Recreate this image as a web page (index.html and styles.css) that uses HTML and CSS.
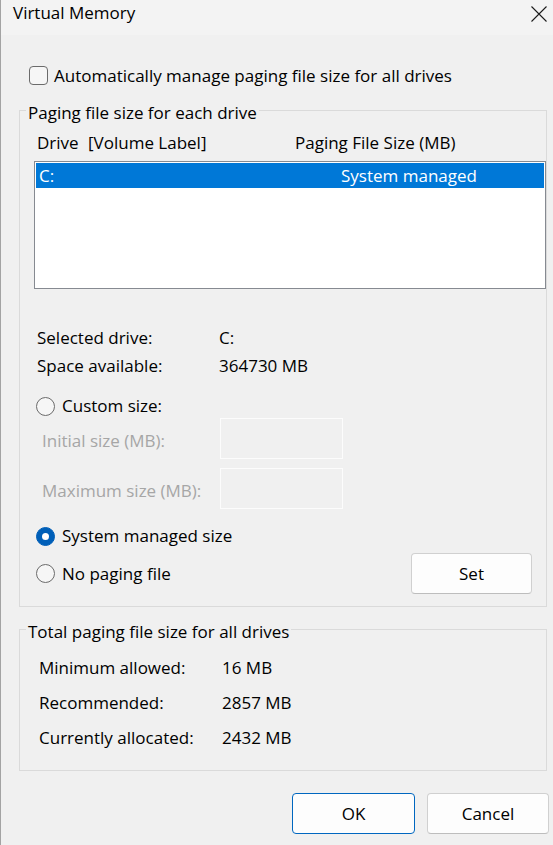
FILE: index.html
```html
<!DOCTYPE html>
<html lang="en">
<head>
    <meta charset="UTF-8">
    <meta name="viewport" content="width=device-width, initial-scale=1.0">
    <title>Virtual Memory</title>
    <link rel="stylesheet" href="styles.css">
</head>
<body>
    <div class="window">
        <div class="titlebar">
            <span class="title">Virtual Memory</span>
            <svg class="close" width="16" height="16" viewBox="0 0 16 16">
                <path d="M0.5 0.5L15.5 15.5M15.5 0.5L0.5 15.5" stroke="#1b1b1b" stroke-width="1.1" fill="none"/>
            </svg>
        </div>

        <div class="content">
            <label class="check-row"><span class="checkbox"></span>Automatically manage paging file size for all drives</label>

            <fieldset class="group group-drive">
                <legend>Paging file size for each drive</legend>
                <div class="list-header">
                    <span>Drive</span>
                    <span>[Volume Label]</span>
                    <span>Paging File Size (MB)</span>
                </div>
                <div class="listview">
                    <div class="list-row selected">
                        <span>C:</span>
                        <span>System managed</span>
                    </div>
                </div>

                <div class="info-row info-first">
                    <span class="info-label">Selected drive:</span>
                    <span>C:</span>
                </div>
                <div class="info-row">
                    <span class="info-label">Space available:</span>
                    <span>364730 MB</span>
                </div>

                <div class="radio-row radio-custom"><span class="radio"></span>Custom size:</div>
                <div class="size-row">
                    <span class="size-label">Initial size (MB):</span>
                    <span class="textbox"></span>
                </div>
                <div class="size-row size-max">
                    <span class="size-label">Maximum size (MB):</span>
                    <span class="textbox"></span>
                </div>
                <div class="radio-row radio-system"><span class="radio checked"></span>System managed size</div>
                <div class="last-row">
                    <div class="radio-row"><span class="radio"></span>No paging file</div>
                    <button class="btn btn-set">Set</button>
                </div>
            </fieldset>

            <fieldset class="group group-total">
                <legend>Total paging file size for all drives</legend>
                <div class="total-row total-first">
                    <span class="total-label">Minimum allowed:</span>
                    <span>16 MB</span>
                </div>
                <div class="total-row">
                    <span class="total-label">Recommended:</span>
                    <span>2857 MB</span>
                </div>
                <div class="total-row">
                    <span class="total-label">Currently allocated:</span>
                    <span>2432 MB</span>
                </div>
            </fieldset>
        </div>

        <div class="footer">
            <button class="btn btn-ok">OK</button>
            <button class="btn">Cancel</button>
        </div>
    </div>
</body>
</html>
```

FILE: styles.css
```css
body {
    margin: 0;
    background-color: #f0f0f0;
    font-family: 'Open Sans', 'Noto Sans', sans-serif;
    font-size: 17px;
    line-height: 23px;
    color: #000;
}

.window {
    width: 553px;
    height: 845px;
    box-sizing: border-box;
    border-left: 1px solid #a3a3a3;
    background-color: #f0f0f0;
}

.titlebar {
    display: flex;
    justify-content: space-between;
    align-items: flex-start;
    height: 35px;
    padding: 1px 6px 0 12px;
    box-sizing: border-box;
    background-color: #f3f3f3;
}

.close {
    margin-top: 5px;
}

.content {
    padding: 0 6px 0 18px;
}

.check-row {
    display: flex;
    align-items: center;
    height: 23px;
    margin: 29px 0 0 10px;
}

.checkbox {
    width: 19px;
    height: 19px;
    box-sizing: border-box;
    border: 1px solid #6b6b6b;
    border-radius: 4px;
    background-color: #f6f6f6;
    margin-right: 6px;
}

.group {
    margin: 0;
    padding: 0 0 12px 0;
    min-width: 0;
    border: 1px solid #dadada;
}

.group legend {
    margin-left: 6px;
    padding: 4px 2px 0;
    line-height: 23px;
}

.group-drive {
    margin-top: 10px;
}

.group-total {
    margin-top: 9px;
    padding-bottom: 15px;
}

.list-header {
    display: grid;
    grid-template-columns: 51px 207px 1fr;
    margin-top: 7px;
    padding-left: 17px;
}

.listview {
    height: 128px;
    box-sizing: border-box;
    margin: 7px 0 0 14px;
    padding: 1px;
    border: 1px solid #868a91;
    background-color: #fff;
}

.list-row {
    display: grid;
    grid-template-columns: 302px 1fr;
    height: 25px;
    line-height: 25px;
    padding-left: 3px;
}

.list-row.selected {
    background-color: #0078d7;
    color: #fff;
}

.info-row {
    display: flex;
    height: 28px;
    line-height: 28px;
    padding-left: 17px;
}

.info-first {
    margin-top: 35px;
}

.info-label {
    width: 182px;
}

.radio-row {
    display: flex;
    align-items: center;
    height: 24px;
    line-height: 24px;
    padding-left: 16px;
}

.radio {
    width: 19px;
    height: 19px;
    box-sizing: border-box;
    border: 1px solid #6b6b6b;
    border-radius: 50%;
    background-color: #f6f6f6;
    margin-right: 7px;
}

.radio.checked {
    display: flex;
    justify-content: center;
    align-items: center;
    border-color: #005fb8;
    background-color: #005fb8;
}

.radio.checked::after {
    content: '';
    width: 7px;
    height: 7px;
    border-radius: 50%;
    background-color: #fff;
}

.radio-custom {
    margin-top: 14px;
}

.radio-system {
    margin-top: 15px;
}

.size-row {
    display: flex;
    align-items: center;
    padding-left: 22px;
}

.size-max {
    margin-top: 9px;
}

.size-label {
    width: 178px;
    padding-top: 4px;
    color: #a6a6a6;
}

.textbox {
    width: 123px;
    height: 41px;
    box-sizing: border-box;
    border: 1px solid #fcfcfc;
}

.last-row {
    display: flex;
    justify-content: space-between;
    align-items: center;
    margin-top: 5px;
}

.btn {
    height: 41px;
    box-sizing: border-box;
    border: 1px solid #d0d0d0;
    border-bottom-color: #bdbdbd;
    border-radius: 4px;
    background-color: #fdfdfd;
    font: inherit;
    color: #000;
    padding: 0;
}

.btn-set {
    width: 121px;
    margin-right: 14px;
}

.total-row {
    display: flex;
    height: 35px;
    line-height: 35px;
    padding-left: 19px;
}

.total-first {
    margin-top: 7px;
}

.total-label {
    width: 183px;
}

.footer {
    display: flex;
    justify-content: flex-end;
    gap: 12px;
    margin-top: 22px;
    padding-right: 4px;
}

.footer .btn {
    width: 122px;
}

.footer .btn-ok {
    width: 123px;
    border-color: #0067c0;
}
```
